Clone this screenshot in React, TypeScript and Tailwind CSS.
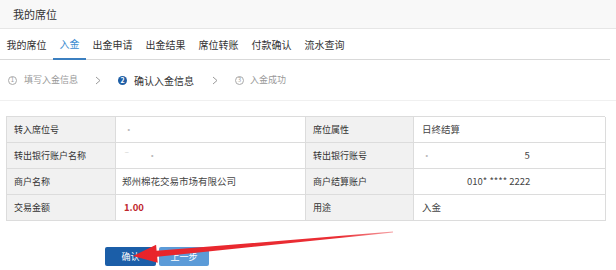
import React from "react";

const font = { fontFamily: '"Noto Sans CJK SC", "Noto Sans", sans-serif' };

function Chevron() {
  return (
    <svg width="6" height="9" viewBox="0 0 6 9" className="shrink-0">
      <polyline points="1,1 5,4.5 1,8" fill="none" stroke="#9a9a9a" strokeWidth="1" />
    </svg>
  );
}

function Circle({ n, active }: { n: string; active?: boolean }) {
  return active ? (
    <span className="w-[9px] h-[9px] rounded-full bg-[#1f5fa6] text-white text-[7px] leading-none flex items-center justify-center font-bold">
      {n}
    </span>
  ) : (
    <span className="w-[9px] h-[9px] rounded-full border border-[#aaa] text-[#999] text-[6px] leading-none flex items-center justify-center">
      {n}
    </span>
  );
}

const tabs = ["我的席位", "入金", "出金申请", "出金结果", "席位转账", "付款确认", "流水查询"];

function Label({ children }: { children: React.ReactNode }) {
  return (
    <div className="h-[26px] bg-[#f1f1f1] border-r border-b border-[#dcdcdc] flex items-center pl-[7px] text-[9px] text-[#333]">
      {children}
    </div>
  );
}
function Value({ children }: { children?: React.ReactNode }) {
  return (
    <div className="h-[26px] bg-white border-r border-b border-[#dcdcdc] flex items-center pl-[6px] text-[9.5px] text-[#444]">
      {children}
    </div>
  );
}

export default function App() {
  return (
    <div className="relative w-[616px] h-[270px] bg-white overflow-hidden" style={font}>
      <div className="h-[29px] bg-[#f8f8f8] border-b border-[#e6e6e6] flex items-center pl-[13px] text-[11px] text-[#333]">
        我的席位
      </div>
      <div className="h-[31px] mr-[6px] border-b border-[#d9d9d9] flex items-stretch">
        {tabs.map((t, i) => (
          <div
            key={t}
            className={
              i === 1
                ? "px-[6.5px] flex items-center text-[10px] text-[#3b8bd0] border-b-2 border-[#3b7fc0] -mb-px"
                : "px-[6.5px] flex items-center text-[10px] text-[#333]"
            }
          >
            {t}
          </div>
        ))}
      </div>
      <div className="h-[41px] border-b border-[#f0f0f0] flex items-center pl-[8px] text-[9px]">
        <Circle n="1" />
        <span className="ml-[7px] text-[#999]">填写入金信息</span>
        <span className="ml-[17px] mr-[17px]"><Chevron /></span>
        <Circle n="2" active />
        <span className="ml-[7px] text-[10px] text-[#333]">确认入金信息</span>
        <span className="ml-[18px] mr-[17px]"><Chevron /></span>
        <Circle n="3" />
        <span className="ml-[6px] text-[#999]">入金成功</span>
      </div>
      <div className="mt-[15px] ml-[6px] w-[599px] grid grid-cols-[109px_190px_108px_192px] border-l border-t border-[#dcdcdc]">
        <Label>转入席位号</Label>
        <Value><span className="ml-[2px] text-[#bbb]">·</span></Value>
        <Label>席位属性</Label>
        <Value><span className="ml-[2px]">日终结算</span></Value>

        <Label>转出银行账户名称</Label>
        <Value><span className="text-[#ccc]">ˉ</span><span className="ml-[16px] text-[#bbb]">·</span></Value>
        <Label>转出银行账号</Label>
        <Value><span className="ml-[2px] text-[#bbb]">·</span><span className="ml-[93px]">5</span></Value>

        <Label>商户名称</Label>
        <Value>郑州棉花交易市场有限公司</Value>
        <Label>商户结算账户</Label>
        <Value><span className="ml-[47px]">010* **** 2222</span></Value>

        <Label>交易金额</Label>
        <Value><span className="ml-[2px] font-bold text-[#c0272d]">1.00</span></Value>
        <Label>用途</Label>
        <Value><span className="ml-[2px]">入金</span></Value>
      </div>
      <div className="mt-[26px] ml-[105px] flex gap-[3px]">
        <div className="w-[51px] h-[19px] bg-[#1b5ea8] rounded-[2px] text-white text-[9px] flex items-center justify-center">确认</div>
        <div className="w-[50px] h-[19px] bg-[#5b9bd8] rounded-[2px] text-white text-[9px] flex items-center justify-center">上一步</div>
      </div>
      <svg className="absolute left-0 top-0" width="616" height="270" viewBox="0 0 616 270">
        <defs>
          <linearGradient id="g" x1="133" y1="256" x2="393" y2="232" gradientUnits="userSpaceOnUse">
            <stop offset="0" stopColor="#e8232a" />
            <stop offset="0.8" stopColor="#ea2f35" />
            <stop offset="1" stopColor="#f5a0a3" />
          </linearGradient>
        </defs>
        <polygon
          points="133,256 156.1,244.8 156.6,250.8 393,231.6 393,232.4 157.2,256.8 157.7,262.8"
          fill="url(#g)"
        />
      </svg>
    </div>
  );
}
